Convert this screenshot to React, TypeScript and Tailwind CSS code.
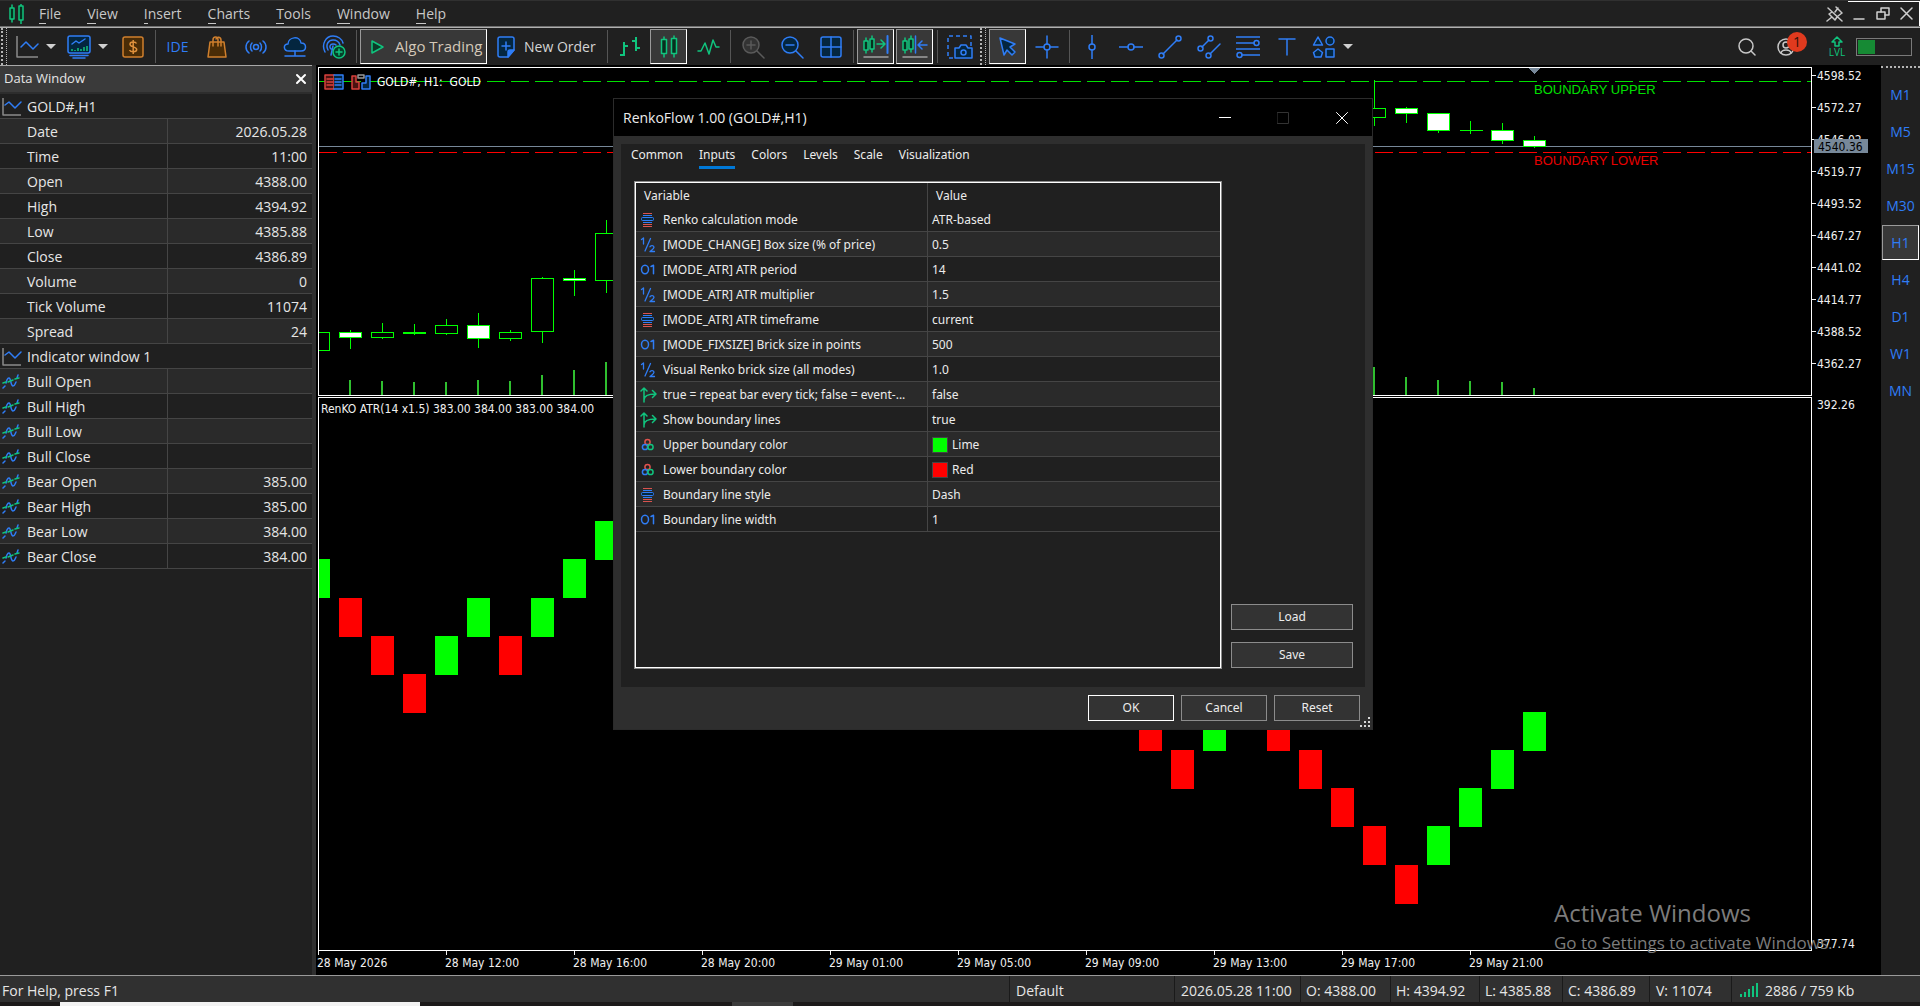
import type { ReactNode } from 'react';
import clsx from 'clsx';

const BLUE = '#2f7df6';
const GREEN = '#10c47e';
const NAVY = '#04263f';

interface Candle {
  i: number;
  high: number;
  top: number;
  bottom: number;
  low: number;
  bear?: boolean;
}

const menu = ['File', 'View', 'Insert', 'Charts', 'Tools', 'Window', 'Help'];

const dataRows: { name: string; value?: string; kind: 'head' | 'price' | 'buffer' }[] = [
  { name: 'GOLD#,H1', kind: 'head' },
  { name: 'Date', value: '2026.05.28', kind: 'price' },
  { name: 'Time', value: '11:00', kind: 'price' },
  { name: 'Open', value: '4388.00', kind: 'price' },
  { name: 'High', value: '4394.92', kind: 'price' },
  { name: 'Low', value: '4385.88', kind: 'price' },
  { name: 'Close', value: '4386.89', kind: 'price' },
  { name: 'Volume', value: '0', kind: 'price' },
  { name: 'Tick Volume', value: '11074', kind: 'price' },
  { name: 'Spread', value: '24', kind: 'price' },
  { name: 'Indicator window 1', kind: 'head' },
  { name: 'Bull Open', kind: 'buffer' },
  { name: 'Bull High', kind: 'buffer' },
  { name: 'Bull Low', kind: 'buffer' },
  { name: 'Bull Close', kind: 'buffer' },
  { name: 'Bear Open', value: '385.00', kind: 'buffer' },
  { name: 'Bear High', value: '385.00', kind: 'buffer' },
  { name: 'Bear Low', value: '384.00', kind: 'buffer' },
  { name: 'Bear Close', value: '384.00', kind: 'buffer' },
];

const inputs: { type: keyof typeof typeIcons; name: string; value: string; color?: string }[] = [
  { type: 'enum', name: 'Renko calculation mode', value: 'ATR-based' },
  { type: 'double', name: '[MODE_CHANGE] Box size (% of price)', value: '0.5' },
  { type: 'int', name: '[MODE_ATR] ATR period', value: '14' },
  { type: 'double', name: '[MODE_ATR] ATR multiplier', value: '1.5' },
  { type: 'enum', name: '[MODE_ATR] ATR timeframe', value: 'current' },
  { type: 'int', name: '[MODE_FIXSIZE] Brick size in points', value: '500' },
  { type: 'double', name: 'Visual Renko brick size (all modes)', value: '1.0' },
  { type: 'bool', name: 'true = repeat bar every tick; false = event-...', value: 'false' },
  { type: 'bool', name: 'Show boundary lines', value: 'true' },
  { type: 'color', name: 'Upper boundary color', value: 'Lime', color: 'bg-[#00ff00]' },
  { type: 'color', name: 'Lower boundary color', value: 'Red', color: 'bg-[#ff0000]' },
  { type: 'enum', name: 'Boundary line style', value: 'Dash' },
  { type: 'int', name: 'Boundary line width', value: '1' },
];

const candles: Candle[] = [
  { i: -1, high: 264, top: 264, bottom: 282, low: 282 },
  { i: 0, high: 261, top: 264, bottom: 269, low: 280, bear: true },
  { i: 1, high: 254, top: 264, bottom: 269, low: 270 },
  { i: 2, high: 255, top: 264, bottom: 265, low: 266 },
  { i: 3, high: 250, top: 257, bottom: 265, low: 266 },
  { i: 4, high: 244, top: 257, bottom: 270, low: 279, bear: true },
  { i: 5, high: 261, top: 264, bottom: 270, low: 272 },
  { i: 6, high: 208, top: 210, bottom: 263, low: 274 },
  { i: 7, high: 201, top: 210, bottom: 212, low: 227, bear: true },
  { i: 8, high: 151, top: 165, bottom: 212, low: 224 },
  { i: 32, high: 11, top: 40, bottom: 49, low: 57 },
  { i: 33, high: 38, top: 40, bottom: 45, low: 54, bear: true },
  { i: 34, high: 44, top: 45, bottom: 62, low: 64, bear: true },
  { i: 35, high: 52, top: 62, bottom: 62, low: 65 },
  { i: 36, high: 54, top: 62, bottom: 72, low: 75, bear: true },
  { i: 37, high: 67, top: 72, bottom: 78, low: 79, bear: true },
];

// [bar, height]
const volumes = [
  [0, 15], [1, 14], [2, 13], [3, 13], [4, 15], [5, 14], [6, 20], [7, 25], [8, 33],
  [32, 28], [33, 18], [34, 15], [35, 14], [36, 13], [37, 7],
];

// [bar, top price, direction]
const bricks: [number, number, 'up' | 'down'][] = [
  [-1, 388, 'up'], [0, 387, 'down'], [1, 386, 'down'], [2, 385, 'down'], [3, 386, 'up'], [4, 387, 'up'],
  [5, 386, 'down'], [6, 387, 'up'], [7, 388, 'up'], [8, 389, 'up'],
  [25, 384, 'down'], [26, 383, 'down'], [27, 384, 'up'], [29, 384, 'down'], [30, 383, 'down'],
  [31, 382, 'down'], [32, 381, 'down'], [33, 380, 'down'], [34, 381, 'up'], [35, 382, 'up'],
  [36, 383, 'up'], [37, 384, 'up'],
];

const prices = ['4598.52', '4572.27', '4546.02', '4519.77', '4493.52', '4467.27', '4441.02', '4414.77', '4388.52', '4362.27'];
const times = ['28 May 2026', '28 May 12:00', '28 May 16:00', '28 May 20:00', '29 May 01:00', '29 May 05:00', '29 May 09:00', '29 May 13:00', '29 May 17:00', '29 May 21:00'];
const timeframes = ['M1', 'M5', 'M15', 'M30', 'H1', 'H4', 'D1', 'W1', 'MN'];

const barX = (i: number) => 31 + 32 * i;
const renkoY = (price: number) => Math.round((392.26 - price) * 38.14);

const chartFont = "font-['DejaVu_Sans_Condensed','Noto_Sans',sans-serif]";

function Svg({ w = 24, h = 24, color = BLUE, children }: { w?: number; h?: number; color?: string; children: ReactNode }) {
  return (
    <svg width={w} height={h} viewBox={`0 0 ${w} ${h}`} fill="none" stroke={color} strokeWidth="1.5" strokeLinecap="round" strokeLinejoin="round" className="shrink-0" aria-hidden="true">
      {children}
    </svg>
  );
}

const CandlePair = ({ x = 0 }: { x?: number }) => (
  <g stroke={GREEN} fill="#06301f">
    <path d={`M${x + 3} 3v3M${x + 3} 15v3M${x + 9} 1v3M${x + 9} 14v3`} />
    <rect x={x + 1} y="6" width="4" height="9" />
    <rect x={x + 7} y="4" width="4" height="10" />
  </g>
);

function ChartIcon({ small = false }: { small?: boolean }) {
  return (
    <Svg w={small ? 20 : 24} h={small ? 20 : 24}>
      <path d={small ? 'M1 1v17h18' : 'M2 1v21h21'} stroke="#8a8a8a" strokeLinecap="butt" />
      <path d={small ? 'M3 8l4-3 6 6 6-6' : 'M6 12l5-5 7 7 5-5'} />
    </Svg>
  );
}

function Arrow() {
  return <span className="h-0 w-0 border-x-[5px] border-t-[5px] border-x-transparent border-t-[#d0d0d0]" />;
}

const typeIcons = {
  enum: (
    <Svg w={16} h={16} color="#d9534f">
      <g strokeWidth="1" strokeLinecap="butt">
        <path d="M3 1.5h9M3 12.5h9M3 14.5h9" />
        <path d="M3 3.5h9M3 10.5h9" stroke={BLUE} />
        <rect x="1.5" y="5.5" width="12" height="3" rx="1" stroke={BLUE} fill={NAVY} />
      </g>
    </Svg>
  ),
  double: (
    <Svg w={16} h={16}>
      <path d="M1.500 2.500L3.500 1v6M10.500 1.500L5 14M10 9.800c.6-1.800 4-1.600 4 .4 0 1.500-2 2.500-4 4.300h4.500" strokeWidth="1.300" />
    </Svg>
  ),
  int: (
    <Svg w={16} h={16}>
      <ellipse cx="5" cy="7.500" rx="3.500" ry="4.200" />
      <path d="M11 4.500l2.500-1.200v8.400" />
    </Svg>
  ),
  bool: (
    <Svg w={17} h={16} color={GREEN}>
      <path d="M4 15V1M1 4l3-3 3 3M4 13c0-4 3-6 11.500-6M12.500 3.500L16 7l-3.500 3.500" />
    </Svg>
  ),
  color: (
    <Svg w={16} h={16}>
      <circle cx="7.500" cy="5" r="2.600" stroke="#e0524d" />
      <circle cx="5" cy="10" r="2.600" />
      <circle cx="10.500" cy="10" r="2.600" stroke={GREEN} />
    </Svg>
  ),
};

const Separator = () => <span className="ml-[3px] mr-[2px] h-[33px] w-px shrink-0 bg-[#555]" />;

const Grip = () => (
  <span className="flex h-[37px] w-[9px] shrink-0 gap-[3px] pl-px">
    <span className="h-full border-l-2 border-dotted border-[#b5b5b5]" />
    <span className="h-full border-l border-dotted border-[#b5b5b5]" />
  </span>
);

function Tool({ label, active, dropdown, children }: { label: string; active?: boolean; dropdown?: boolean; children: ReactNode }) {
  return (
    <button
      aria-label={label}
      title={label}
      className={clsx(
        'mx-px flex h-[35px] shrink-0 items-center',
        dropdown ? 'w-[50px] gap-[7px] pl-[5px]' : 'w-[37px] justify-center',
        active && 'border border-b-white border-l-[#9a9a9a] border-r-white border-t-[#9a9a9a] bg-[#383838]',
      )}
    >
      {children}
      {dropdown && <Arrow />}
    </button>
  );
}

function MenuBar() {
  return (
    <header className="flex h-[27px] shrink-0 items-center border-b border-b-[#6e6e6e] border-t border-t-[#303030] bg-[#202020] pl-[8px]">
      <Svg w={18} h={20} color={GREEN}>
        <g fill="#06301f">
          <path d="M4 1v3M4 15v3M13 0v2M13 16v4" />
          <rect x="2" y="4" width="4" height="11" />
          <rect x="11" y="2" width="4" height="14" />
        </g>
      </Svg>
      <nav className="ml-[13px] flex gap-[26px] text-[14px] leading-5 text-[#c8c8c8]">
        {menu.map((m) => (
          <button key={m}>
            <span className="border-b border-[#c8c8c8]">{m[0]}</span>
            {m.slice(1)}
          </button>
        ))}
      </nav>
      <div className="ml-auto flex h-full items-center">
        <button aria-label="Unpin" className="mr-[4px]">
          <Svg w={18} h={18} color="#c8c8c8">
            <path d="M2 3l14 13M10 2l6 6M12 3l-3 4M16 8l-4 3M6 7L3 9l6 6 2-3M6 12l-5 4" />
          </Svg>
        </button>
        <div className="flex h-full w-[72px] items-center justify-between border-r border-t border-white pl-[5px] pr-[6px]">
          <button aria-label="Minimize">
            <Svg w={12} h={14} color="#d0d0d0"><path d="M1 12h10" /></Svg>
          </button>
          <button aria-label="Restore">
            <Svg w={14} h={14} color="#d0d0d0">
              <path d="M5 5V1h8v7H9" />
              <rect x="1" y="5" width="8" height="7" />
            </Svg>
          </button>
          <button aria-label="Close">
            <Svg w={13} h={14} color="#d0d0d0"><path d="M1 1l11 11M12 1L1 12" /></Svg>
          </button>
        </div>
      </div>
    </header>
  );
}

function Toolbar() {
  return (
    <div className="flex h-[38px] shrink-0 items-center border-t border-[#b0b0b0] bg-[#202020]">
      <Grip />
      <Tool label="Charts" dropdown>
        <ChartIcon />
      </Tool>
      <Tool label="Templates" dropdown>
        <Svg>
          <rect x="1" y="1" width="22" height="17" rx="2" fill={NAVY} />
          <path d="M5 9l4-3 3 2 6-4" />
          <path d="M5 16v-2M8 16v-1M11 16v-3M14 16v-2M17 16v-4M20 16v-5" stroke={GREEN} strokeLinecap="butt" />
          <path d="M3 20.500h18M6 23h12" />
        </Svg>
      </Tool>
      <Tool label="Quotes">
        <svg width="22" height="22" viewBox="0 0 22 22" aria-hidden="true">
          <rect x="1" y="1" width="20" height="20" rx="2" fill="#4a2c06" stroke="#cf7f2d" strokeWidth="1.5" />
          <path d="M14.500 7.500C13.500 5.500 8 5.300 8 8.200c0 3.400 6.700 2 6.700 5.400 0 2.900-6 2.900-7.200.4M11.200 4v14" fill="none" stroke="#e0913c" strokeWidth="1.5" />
        </svg>
      </Tool>
      <Separator />
      <Tool label="MetaEditor">
        <span className="text-[14px] text-[#2f7df6]">IDE</span>
      </Tool>
      <Tool label="Market">
        <Svg w={20} color="#cf7f2d">
          <path d="M3 7h14l2 15H1L3 7z" fill="#4a2c06" />
          <path d="M6 11V5c0-4 5-4 5 0v6M9 4c1-3 5-2 5 1v6" />
        </Svg>
      </Tool>
      <Tool label="Signals">
        <Svg>
          <circle cx="12" cy="12" r="2.500" />
          <path d="M8 8c-2 2-2 6 0 8M16 8c2 2 2 6 0 8M5 6c-4 3-4 9 0 12M19 6c4 3 4 9 0 12" />
        </Svg>
      </Tool>
      <Tool label="VPS">
        <Svg>
          <path d="M6 16c-6 0-6-7-1-7 0-7 12-9 13-1 6 0 6 8 0 8H6z" fill={NAVY} />
          <path d="M12 16v4M2 21h8M14 21h8M10 21h4" />
        </Svg>
      </Tool>
      <Tool label="Add broker">
        <Svg>
          <path d="M3 17C-1 9 4 1 11 1c5 0 9 3 10 7M6 15C3 9 7 5 11 5c4 0 6 2 7 5M9 14c-2-2-1-5 2-5 1 0 2 0 3 1M11 11l-2 9" />
          <circle cx="17" cy="17" r="6" fill="#06402a" stroke={GREEN} />
          <path d="M17 14v6M14 17h6" stroke={GREEN} />
        </Svg>
      </Tool>
      <Separator />
      <button className="mx-px flex h-[35px] w-[127px] shrink-0 items-center gap-[10px] border border-b-white border-l-[#9a9a9a] border-r-white border-t-[#9a9a9a] bg-[#383838] pl-[9px] text-[15px] text-[#d4c8b8]">
        <Svg w={15} h={16} color={GREEN}><path d="M2 2v12l11-6z" fill="#0b3b28" /></Svg>
        Algo Trading
      </button>
      <button className="mr-px flex h-[35px] w-[115px] shrink-0 items-center gap-[9px] pl-[9px] text-[14px] text-[#d4d4d4]">
        <Svg w={18} h={22}>
          <path d="M3 1h12q2 0 2 2v11l-6 7H3q-2 0-2-2V3q0-2 2-2z" fill={NAVY} />
          <path d="M17 14h-4q-2 0-2 2v5z" fill={BLUE} />
          <path d="M9 6v8M5 10h8" />
        </Svg>
        New Order
      </button>
      <Separator />
      <Tool label="Bar chart">
        <Svg color={GREEN}><path d="M6 7v14M2 20h4M6 11h4M18 2v14M14 6h4M18 13h4" strokeWidth="2" strokeLinecap="butt" /></Svg>
      </Tool>
      <Tool label="Candlesticks" active>
        <Svg color={GREEN}>
          <g fill="#06301f">
            <path d="M7 2v2M7 19v3M17 1v2M17 19v3" />
            <rect x="4.500" y="4.500" width="5" height="14" />
            <rect x="14.500" y="3.500" width="5" height="15" />
          </g>
        </Svg>
      </Tool>
      <Tool label="Line chart">
        <Svg color={GREEN}><path d="M2 16h3l4-8 4 11 4-14 3 7h3" /></Svg>
      </Tool>
      <Separator />
      <Tool label="Zoom in">
        <Svg color="#5a5a5a">
          <circle cx="10" cy="10" r="8" fill="#333" />
          <path d="M16 16l7 7M10 6v8M6 10h8" />
        </Svg>
      </Tool>
      <Tool label="Zoom out">
        <Svg>
          <circle cx="10" cy="10" r="8" fill={NAVY} />
          <path d="M16 16l7 7M6 10h8" />
        </Svg>
      </Tool>
      <Tool label="Tile windows">
        <Svg w={22} h={22}>
          <rect x="1" y="1" width="20" height="20" rx="2" fill={NAVY} />
          <path d="M11 1v20M1 11h20" />
        </Svg>
      </Tool>
      <Separator />
      <Tool label="Auto scroll" active>
        <Svg w={26}>
          <CandlePair />
          <path d="M14 9h7M18 5l4 4-4 4" stroke={GREEN} />
          <path d="M24.500 1v17" strokeWidth="2" />
          <path d="M1 22h24" stroke="#a0a0a0" />
        </Svg>
      </Tool>
      <Tool label="Chart shift" active>
        <Svg w={26}>
          <CandlePair />
          <path d="M13.500 1v17M25 10h-8M20 6l-4 4 4 4" />
          <path d="M1 22h24" stroke="#a0a0a0" />
        </Svg>
      </Tool>
      <Separator />
      <Tool label="Screenshot">
        <Svg w={26}>
          <path d="M6 23H1V1h23v10" strokeDasharray="4 3" strokeLinecap="butt" />
          <path d="M8 13h4l2-3h5l2 3h4v10H8z" fill={NAVY} />
          <circle cx="16.500" cy="17.500" r="2.500" />
        </Svg>
      </Tool>
      <Grip />
      <Tool label="Cursor" active>
        <Svg><path d="M4 3l15 6-5 3 5 5-3 3-5-5-3 5z" fill={NAVY} /></Svg>
      </Tool>
      <Tool label="Crosshair">
        <Svg>
          <path d="M12 1v8M12 15v8M1 12h8M15 12h8" />
          <circle cx="12" cy="12" r="3" />
        </Svg>
      </Tool>
      <Separator />
      <Tool label="Vertical line">
        <Svg>
          <path d="M12 0v9M12 15v9" />
          <circle cx="12" cy="12" r="3" />
        </Svg>
      </Tool>
      <Tool label="Horizontal line">
        <Svg>
          <path d="M0 12h9M15 12h9" />
          <circle cx="12" cy="12" r="3" />
        </Svg>
      </Tool>
      <Tool label="Trend line">
        <Svg>
          <path d="M5 19L19 5" />
          <circle cx="3.500" cy="20.500" r="2.500" />
          <circle cx="20.500" cy="3.500" r="2.500" />
        </Svg>
      </Tool>
      <Tool label="Equidistant channel">
        <Svg>
          <path d="M5 12l7-7M13 19L23 9" />
          <circle cx="3.500" cy="13.500" r="2.500" />
          <circle cx="13.500" cy="3.500" r="2.500" />
          <circle cx="11.500" cy="20.500" r="2.500" />
        </Svg>
      </Tool>
      <Tool label="Fibonacci">
        <Svg>
          <path d="M0 2h24M0 8h18M0 14h24M6 20h18" />
          <circle cx="20.500" cy="8" r="2.500" />
          <circle cx="3.500" cy="20" r="2.500" />
        </Svg>
      </Tool>
      <Tool label="Text">
        <Svg><path d="M4 4h16M12 4v16" /></Svg>
      </Tool>
      <Tool label="Objects" dropdown>
        <Svg>
          <g fill={NAVY}>
            <path d="M6 2l4.500 8h-9z" />
            <circle cx="18" cy="6" r="4" />
            <path d="M6 14l4.500 3.500L9 22H3l-1.500-4.500z" />
            <rect x="14" y="14" width="8" height="8" />
          </g>
        </Svg>
      </Tool>
      <div className="ml-auto flex items-center pr-[8px]">
        <button aria-label="Search" className="mr-[21px]">
          <Svg w={18} h={18} color="#c8c8c8">
            <circle cx="8" cy="8" r="7" />
            <path d="M13 13l4 4" />
          </Svg>
        </button>
        <button aria-label="Account, 1 notification" className="relative mr-[21px] w-[30px]">
          <Svg w={18} h={18} color="#c8c8c8">
            <circle cx="9" cy="9" r="8" />
            <circle cx="9" cy="7" r="3" />
            <path d="M4 15c1-4 9-4 10 0" />
          </Svg>
          <span className="absolute -top-[6px] left-[10px] h-5 w-5 rounded-full bg-[#e03a1e] text-center text-[14px] leading-5 text-[#301008]">1</span>
        </button>
        <button aria-label="Level" className="mr-[10px] flex w-[18px] flex-col items-center text-[10px] leading-[10px] text-[#10c47e]">
          <Svg w={12} h={11} color={GREEN}><path d="M4 10V6H1l5-5 5 5H8v4z" /></Svg>
          LVL
        </button>
        <div className="h-[18px] w-[56px] border border-[#7a7a7a] p-px">
          <div className="h-full w-[17px] bg-[#168a34]" />
        </div>
      </div>
    </div>
  );
}

function DataWindow() {
  return (
    <aside className="w-[312px] shrink-0 bg-[#202020] text-[14px] text-[#e6e6e6]">
      <div className="flex h-[29px] items-center justify-between border-b-2 border-t border-b-[#2d2d2d] border-t-[#a8a8a8] bg-[#3a3a3a] pl-[4px] pr-[5px]">
        <h2 className="text-[13px]">Data Window</h2>
        <button aria-label="Close">
          <Svg w={12} h={12} color="#fff"><path d="M2 2l8 8M10 2l-8 8" strokeWidth="2" /></Svg>
        </button>
      </div>
      <table className="w-full table-fixed border-separate border-spacing-0 leading-5">
        <colgroup>
          <col className="w-[168px]" />
          <col />
        </colgroup>
        <tbody>
          {dataRows.map((row, i) => (
            <tr key={row.name} className={i % 2 ? 'bg-[#2a2a2a]' : ''}>
              <td className={clsx('h-[25px] border-b border-[#454545] p-0 pt-[2px]', row.kind !== 'head' && 'border-r')} colSpan={row.kind === 'head' ? 2 : 1}>
                <div className="flex items-center pl-[2px]">
                  <span className="flex w-[25px] items-center">
                    {row.kind === 'head' && <ChartIcon small />}
                    {row.kind === 'buffer' && (
                      <Svg w={18} h={16}>
                        <path d="M1 14l2-2M4 9c1-5 3-6 4-4s1 7 3 7 2-2 3-4M15 4l1-3" />
                        <path d="M1 9l3-1M6 8l5-2M13 5l4-1" stroke={GREEN} />
                      </Svg>
                    )}
                  </span>
                  {row.name}
                </div>
              </td>
              {row.kind !== 'head' && <td className="border-b border-[#454545] p-0 pr-[5px] pt-[2px] text-right">{row.value}</td>}
            </tr>
          ))}
        </tbody>
      </table>
    </aside>
  );
}

function PricePane() {
  return (
    <div className="flex h-[329px] shrink-0">
      <div className="relative min-w-0 flex-1 overflow-hidden border border-white">
        <svg className="block h-full w-full" shapeRendering="crispEdges">
          <path d="M0 13.5h1600" stroke="#00e000" strokeDasharray="18 6" />
          <path d="M0 78.5h1600" stroke="#778899" />
          <path d="M0 84.5h1600" stroke="#ff0000" strokeDasharray="18 6" />
          {volumes.map(([i, h]) => (
            <rect key={i} x={barX(i) - 1} y={327 - h} width="2" height={h} fill="#2fbf2f" />
          ))}
          <g transform="translate(0.5 0.5)" stroke="#00ff00">
            {candles.map((c) => (
              <g key={c.i}>
                <path d={`M${barX(c.i)} ${c.high}V${c.top}M${barX(c.i)} ${c.bottom}V${c.low + 0.5}`} />
                {c.top === c.bottom ? (
                  <path d={`M${barX(c.i) - 11} ${c.top}h23`} />
                ) : (
                  <rect x={barX(c.i) - 11} y={c.top} width="22" height={c.bottom - c.top} fill={c.bear ? '#fff' : '#000'} />
                )}
              </g>
            ))}
          </g>
          <path d="M1210 0h11l-5.500 6z" fill="#778899" />
          <g className="font-['Liberation_Sans',Arial,sans-serif] text-[13px]">
            <text x="1215" y="26" fill="#00e000">BOUNDARY UPPER</text>
            <text x="1215" y="97" fill="#e80000">BOUNDARY LOWER</text>
          </g>
        </svg>
        <div className="absolute left-[5px] top-[6px] flex items-center">
          <Svg w={20} h={16} color="#d9413d">
            <rect x="1" y="1" width="9" height="14" fill="#4a1210" />
            <path d="M10 1h9v14h-9" stroke={BLUE} fill={NAVY} />
            <path d="M3 5h6M3 8h6M3 11h6" />
            <path d="M11 5h6M11 8h6M11 11h6" stroke={BLUE} />
          </Svg>
          <span className="w-[7px]" />
          <Svg w={20} h={16} color="#d9413d">
            <path d="M1 2h4v6h3v7H1z" fill="#4a1210" />
            <path d="M15 2h4v13h-8V9h4z" stroke={BLUE} fill={NAVY} />
            <rect x="7" y="1" width="6" height="3" stroke="#999" />
          </Svg>
          <span className={clsx(chartFont, 'ml-[6px] whitespace-pre text-[12px] leading-4 text-white')}>GOLD#, H1:  GOLD</span>
        </div>
      </div>
      <svg className={clsx(chartFont, 'h-full w-[69px] shrink-0 text-[12px]')} fill="#f0f0f0">
        {prices.map((p, i) => (
          <g key={p}>
            <rect x="0" y={8 + 32 * i} width="4" height="1" />
            <text x="5" y={13 + 32 * i}>{p}</text>
          </g>
        ))}
        <rect x="2" y="72" width="54" height="14" fill="#778899" />
        <text x="6" y="84" fill="#000">4540.36</text>
      </svg>
    </div>
  );
}

function RenkoPane() {
  return (
    <div className="mt-px flex min-h-0 flex-1">
      <div className="relative min-w-0 flex-1 overflow-hidden border border-white">
        <svg className="block h-full w-full" shapeRendering="crispEdges">
          {bricks.map(([i, price, dir]) => (
            <rect key={i} x={barX(i) - 11} y={renkoY(price) - 1} width="23" height="39" fill={dir === 'up' ? '#00ff00' : '#ff0000'} />
          ))}
        </svg>
        <span className={clsx(chartFont, 'absolute left-[2px] top-[3px] text-[12px] leading-4 text-[#f0f0f0]')}>
          RenKO ATR(14 x1.5) 383.00 384.00 383.00 384.00
        </span>
      </div>
      <div className={clsx(chartFont, 'flex w-[69px] shrink-0 flex-col justify-between border-t border-black pl-[5px] text-[12px] leading-[14px] text-[#f0f0f0]')}>
        <span>392.26</span>
        <span>377.74</span>
      </div>
    </div>
  );
}

function ChartArea() {
  return (
    <main className="relative flex min-w-0 flex-1 flex-col overflow-hidden bg-black pt-[2px]">
      <div className="flex min-h-0 flex-1 flex-col pl-[2px]">
        <PricePane />
        <RenkoPane />
      </div>
      <svg className={clsx(chartFont, 'h-[24px] w-full shrink-0 text-[12px]')} fill="#f0f0f0">
        {times.map((t, i) => (
          <g key={t}>
            <rect x={2 + 128 * i} y="0" width="1" height="4" />
            <text x={1 + 128 * i} y="16">{t}</text>
          </g>
        ))}
      </svg>
    </main>
  );
}

function Dialog() {
  const button = 'h-[26px] border bg-[#333] text-[12px] leading-4';
  return (
    <section
      role="dialog"
      aria-label="RenkoFlow 1.00 (GOLD#,H1)"
      className="absolute left-[613px] top-[98px] flex h-[632px] w-[760px] flex-col border border-[#2b2b2b] bg-[#2e2e2e] font-['Noto_Sans','Open_Sans',sans-serif] text-[12px] text-[#ececec]"
    >
      <div className="flex h-[37px] shrink-0 items-center bg-black pl-[9px]">
        <h1 className="flex-1 font-['Open_Sans','Noto_Sans',sans-serif] text-[14px]">RenkoFlow 1.00 (GOLD#,H1)</h1>
        <button aria-label="Minimize" className="flex w-[58px] justify-center">
          <Svg w={12} h={12} color="#fff"><path d="M0 5.500h12" strokeWidth="1" /></Svg>
        </button>
        <button aria-label="Maximize" className="flex w-[58px] justify-center">
          <Svg w={12} h={12} color="#333"><path d="M.5.5h11v11H.5z" strokeWidth="1" /></Svg>
        </button>
        <button aria-label="Close" className="flex w-[60px] justify-center">
          <Svg w={12} h={12} color="#fff"><path d="M.5.5l11 11M11.500.5l-11 11" strokeWidth="1" /></Svg>
        </button>
      </div>
      <div className="mx-[7px] mt-[8px] flex flex-1 flex-col bg-[#202020]">
        <div role="tablist" className="flex h-[37px] items-start gap-[16px] pl-[10px] pt-[2px]">
          {['Common', 'Inputs', 'Colors', 'Levels', 'Scale', 'Visualization'].map((tab) => (
            <button
              key={tab}
              role="tab"
              aria-selected={tab === 'Inputs'}
              className={clsx('h-[23px] border-b-[3px] pb-[2px] leading-[18px]', tab === 'Inputs' ? 'border-[#0078d7]' : 'border-transparent')}
            >
              {tab}
            </button>
          ))}
        </div>
        <div className="mb-[18px] ml-[13px] mr-[12px] flex flex-1 gap-[9px]">
          <div className="flex-1 border border-[#8a8a8a]">
            <div className="h-full border border-white">
              <table className="w-full table-fixed border-separate border-spacing-0 leading-4">
                <thead>
                  <tr className="text-left">
                    <th className="h-[24px] w-[292px] border-r border-[#454545] p-0 pl-[8px] pt-[2px] font-normal">Variable</th>
                    <th className="p-0 pl-[8px] pt-[2px] font-normal">Value</th>
                  </tr>
                </thead>
                <tbody>
                  {inputs.map((row, i) => (
                    <tr key={row.name} className={i % 2 ? 'bg-[#2a2a2a]' : ''}>
                      <td className="h-[25px] border-b border-r border-[#454545] p-0 pt-[2px]">
                        <div className="flex items-center whitespace-nowrap pl-[4px]">
                          <span className="w-[23px] shrink-0">{typeIcons[row.type]}</span>
                          {row.name}
                        </div>
                      </td>
                      <td className="border-b border-[#454545] p-0 pt-[2px]">
                        <div className="flex items-center gap-[4px] pl-[4px]">
                          {row.color && <span className={clsx('h-4 w-4 border border-[#444]', row.color)} />}
                          {row.value}
                        </div>
                      </td>
                    </tr>
                  ))}
                </tbody>
              </table>
            </div>
          </div>
          <div className="flex w-[122px] flex-col justify-end gap-[12px] pb-px">
            <button className={clsx(button, 'border-[#8c8c8c]')}>Load</button>
            <button className={clsx(button, 'border-[#8c8c8c]')}>Save</button>
          </div>
        </div>
      </div>
      <div className="flex h-[42px] items-start justify-end gap-[7px] pr-[12px] pt-[8px]">
        <button className={clsx(button, 'w-[86px] border-white')}>OK</button>
        <button className={clsx(button, 'w-[86px] border-[#8c8c8c]')}>Cancel</button>
        <button className={clsx(button, 'w-[86px] border-[#8c8c8c]')}>Reset</button>
      </div>
      <svg width="11" height="11" className="absolute bottom-px right-px" fill="#d8d8d8" aria-hidden="true">
        <path d="M8 0h2v2H8zM8 4h2v2H8zM4 4h2v2H4zM8 8h2v2H8zM4 8h2v2H4zM0 8h2v2H0z" />
      </svg>
    </section>
  );
}

function Timeframes() {
  return (
    <nav aria-label="Timeframes" className="flex w-[39px] shrink-0 flex-col items-center bg-[#202020] pt-px">
      <span className="mb-[9px] w-full border-t-2 border-dotted border-[#b5b5b5]" />
      {timeframes.map((tf) => (
        <button
          key={tf}
          className={clsx(
            'mb-[2px] h-[35px] w-[37px] text-[14px] text-[#2f7df6]',
            tf === 'H1' && 'border border-b-white border-l-[#9a9a9a] border-r-white border-t-[#9a9a9a] bg-[#383838]',
          )}
        >
          {tf}
        </button>
      ))}
    </nav>
  );
}

function StatusBar() {
  const cell = 'flex shrink-0 items-center border-l border-[#1a1a1a] pt-[2px]';
  return (
    <footer className="flex h-[27px] shrink-0 border-t border-[#9a9a9a] bg-[#303030] text-[14px] text-[#e6e6e6]">
      <span className="flex flex-1 items-center pl-[2px] pt-[2px]">For Help, press F1</span>
      <span className={clsx(cell, 'w-[165px] pl-[6px]')}>Default</span>
      <span className={clsx(cell, 'w-[126px] pl-[6px]')}>2026.05.28 11:00</span>
      <span className={clsx(cell, 'w-[90px] pl-[5px]')}>O: 4388.00</span>
      <span className={clsx(cell, 'w-[89px] pl-[5px]')}>H: 4394.92</span>
      <span className={clsx(cell, 'w-[83px] pl-[5px]')}>L: 4385.88</span>
      <span className={clsx(cell, 'w-[87px] pl-[5px]')}>C: 4386.89</span>
      <span className={clsx(cell, 'w-[82px] pl-[6px]')}>V: 11074</span>
      <span className={clsx(cell, 'w-[189px] gap-[7px] pl-[8px]')}>
        <svg width="18" height="14" fill={GREEN} aria-hidden="true">
          <path d="M0 11h2v3H0zM4 9h2v5H4zM8 6h2v8H8zM12 3h2v11h-2zM16 0h2v14h-2z" />
        </svg>
        2886 / 759 Kb
      </span>
    </footer>
  );
}

export default function App() {
  return (
    <div className="relative flex h-screen flex-col overflow-hidden bg-[#1c1a1a] font-['Open_Sans','Noto_Sans',sans-serif]">
      <MenuBar />
      <Toolbar />
      <div className="flex min-h-0 flex-1">
        <DataWindow />
        <div className="w-[4px] shrink-0 bg-[#2f2f2f]" />
        <ChartArea />
        <Timeframes />
      </div>
      <StatusBar />
      <div className="flex h-[4px] shrink-0 bg-[#1c1a1a] pl-[60px]">
        <div className="w-[360px] bg-[#f2f2f2]" />
        <div className="ml-[312px] w-[61px] bg-[#3c3c3c]" />
      </div>
      <Dialog />
      <div className="pointer-events-none absolute bottom-[49px] right-[84px] w-[282px] whitespace-nowrap text-[#7c7c7c]">
        <p className="text-[24px] leading-8">Activate Windows</p>
        <p className="text-[17px] leading-7">Go to Settings to activate Windows.</p>
      </div>
    </div>
  );
}
